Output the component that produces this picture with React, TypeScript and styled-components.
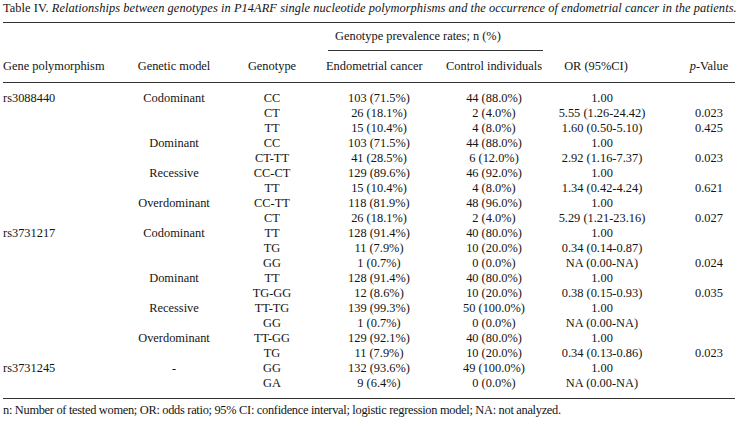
import React from "react";
import styled, { createGlobalStyle } from "styled-components";

const GlobalStyle = createGlobalStyle`
  html, body {
    margin: 0;
    padding: 0;
    background: #ffffff;
  }
  body {
    font-family: "Liberation Serif", "Times New Roman", serif;
    color: #141414;
  }
`;

const Page = styled.div`
  width: 738px;
  padding: 0 3px 0 3px;
  box-sizing: border-box;
`;

const Caption = styled.div`
  font-size: 12.4px;
  line-height: 16px;
  white-space: nowrap;
  letter-spacing: 0.07px;
  em {
    font-style: italic;
  }
`;

const Table = styled.div`
  display: grid;
  grid-template-columns: 127px 88px 108px 106px 124px 92px 87px;
  margin-top: 6px;
  border-top: 1.5px solid #333;
  border-bottom: 1.5px solid #333;
  font-size: 12.4px;
  line-height: 15px;
  white-space: nowrap;
`;

const Span = styled.div`
  grid-column: 4 / 6;
  margin: 0 13px 0 2px;
  padding: 6px 0 6px 7px;
  border-bottom: 1.3px solid #333;
`;

const Blank = styled.div<{ $cols: string }>`
  grid-column: ${(p) => p.$cols};
`;

const Head = styled.div<{ $align?: string; $shift?: number }>`
  padding: 8px 0 8px;
  border-bottom: 1.5px solid #333;
  text-align: ${(p) => p.$align || "center"};
  padding-left: ${(p) => (p.$shift && p.$shift > 0 ? p.$shift : 0)}px;
  padding-right: ${(p) => (p.$shift && p.$shift < 0 ? -p.$shift : 0)}px;
`;

const Cell = styled.div<{ $align?: string; $shift?: number; $first?: boolean; $last?: boolean }>`
  text-align: ${(p) => p.$align || "center"};
  padding-top: ${(p) => (p.$first ? 8 : 0)}px;
  padding-bottom: ${(p) => (p.$last ? 7 : 0)}px;
  padding-left: ${(p) => (p.$shift && p.$shift > 0 ? p.$shift : 0)}px;
  padding-right: ${(p) => (p.$shift && p.$shift < 0 ? -p.$shift : 0)}px;
`;

const Note = styled.div`
  font-size: 12.4px;
  line-height: 15px;
  padding-top: 4px;
  letter-spacing: -0.3px;
  white-space: nowrap;
`;

type Row = [string, string, string, string, string, string, string];

const rows: Row[] = [
  ["rs3088440", "Codominant", "CC", "103 (71.5%)", "44 (88.0%)", "1.00", ""],
  ["", "", "CT", "26 (18.1%)", "2 (4.0%)", "5.55 (1.26-24.42)", "0.023"],
  ["", "", "TT", "15 (10.4%)", "4 (8.0%)", "1.60 (0.50-5.10)", "0.425"],
  ["", "Dominant", "CC", "103 (71.5%)", "44 (88.0%)", "1.00", ""],
  ["", "", "CT-TT", "41 (28.5%)", "6 (12.0%)", "2.92 (1.16-7.37)", "0.023"],
  ["", "Recessive", "CC-CT", "129 (89.6%)", "46 (92.0%)", "1.00", ""],
  ["", "", "TT", "15 (10.4%)", "4 (8.0%)", "1.34 (0.42-4.24)", "0.621"],
  ["", "Overdominant", "CC-TT", "118 (81.9%)", "48 (96.0%)", "1.00", ""],
  ["", "", "CT", "26 (18.1%)", "2 (4.0%)", "5.29 (1.21-23.16)", "0.027"],
  ["rs3731217", "Codominant", "TT", "128 (91.4%)", "40 (80.0%)", "1.00", ""],
  ["", "", "TG", "11 (7.9%)", "10 (20.0%)", "0.34 (0.14-0.87)", ""],
  ["", "", "GG", "1 (0.7%)", "0 (0.0%)", "NA (0.00-NA)", "0.024"],
  ["", "Dominant", "TT", "128 (91.4%)", "40 (80.0%)", "1.00", ""],
  ["", "", "TG-GG", "12 (8.6%)", "10 (20.0%)", "0.38 (0.15-0.93)", "0.035"],
  ["", "Recessive", "TT-TG", "139 (99.3%)", "50 (100.0%)", "1.00", ""],
  ["", "", "GG", "1 (0.7%)", "0 (0.0%)", "NA (0.00-NA)", ""],
  ["", "Overdominant", "TT-GG", "129 (92.1%)", "40 (80.0%)", "1.00", ""],
  ["", "", "TG", "11 (7.9%)", "10 (20.0%)", "0.34 (0.13-0.86)", "0.023"],
  ["rs3731245", "-", "GG", "132 (93.6%)", "49 (100.0%)", "1.00", ""],
  ["", "", "GA", "9 (6.4%)", "0 (0.0%)", "NA (0.00-NA)", ""],
];

// per column: alignment and horizontal nudge
const cols: { align: string; shift: number }[] = [
  { align: "left", shift: 0 },
  { align: "center", shift: 0 },
  { align: "center", shift: 0 },
  { align: "center", shift: 0 },
  { align: "center", shift: 0 },
  { align: "center", shift: 0 },
  { align: "center", shift: 35 },
];

const App: React.FC = () => {
  return (
    <Page>
      <GlobalStyle />
      <Caption>
        Table IV. <em>Relationships between genotypes in P14ARF single nucleotide polymorphisms and the occurrence of endometrial cancer in the patients.</em>
      </Caption>
      <Table>
        <Blank $cols="1 / 4" />
        <Span>Genotype prevalence rates; n (%)</Span>
        <Blank $cols="6 / 8" />

        <Head $align="left">Gene polymorphism</Head>
        <Head>Genetic model</Head>
        <Head>Genotype</Head>
        <Head $shift={-16}>Endometrial cancer</Head>
        <Head>Control individuals</Head>
        <Head $shift={-12}>OR (95%CI)</Head>
        <Head $shift={35}>
          <i>p</i>-Value
        </Head>

        {rows.map((r, i) =>
          r.map((v, j) => (
            <Cell
              key={i + "-" + j}
              $align={cols[j].align}
              $shift={cols[j].shift}
              $first={i === 0}
              $last={i === rows.length - 1}
            >
              {v || "\u00a0"}
            </Cell>
          ))
        )}
      </Table>
      <Note>
        n: Number of tested women; OR: odds ratio; 95% CI: confidence interval; logistic regression model; NA: not analyzed.
      </Note>
    </Page>
  );
};

export default App;
